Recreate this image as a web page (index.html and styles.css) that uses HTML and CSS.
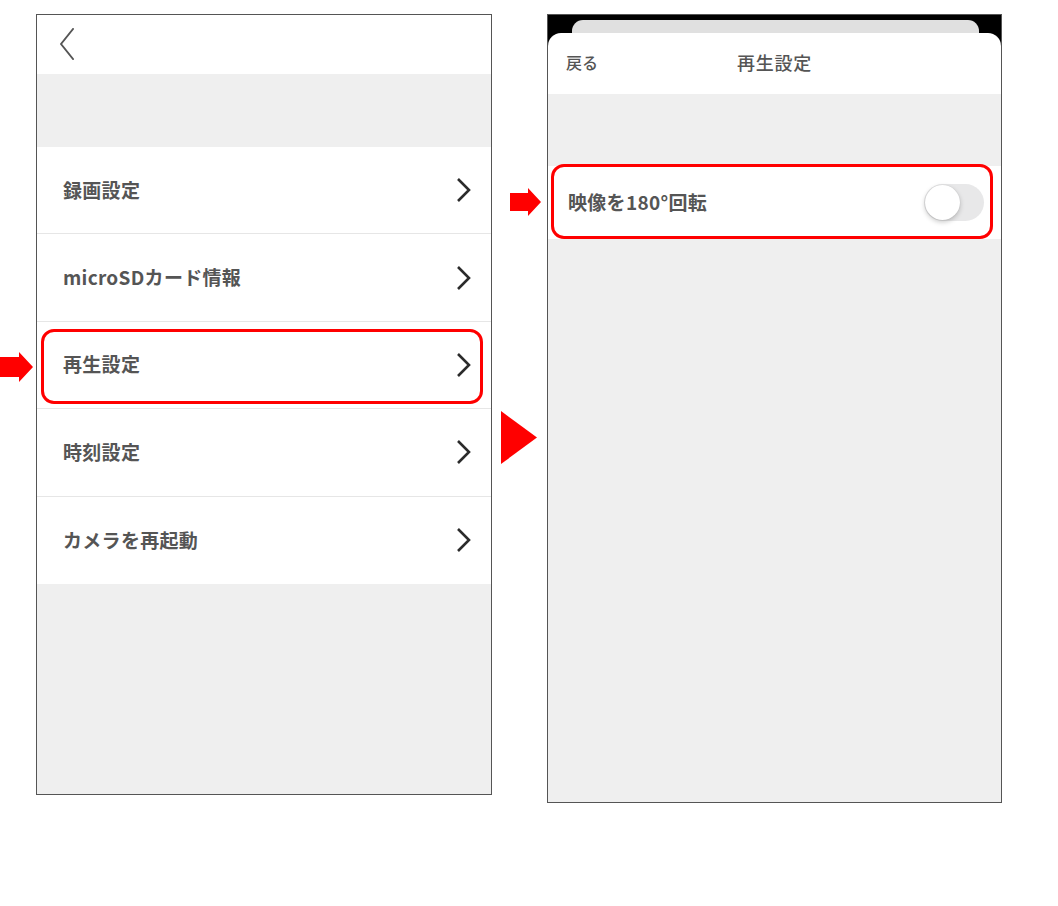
FILE: index.html
```html
<!DOCTYPE html>
<html lang="ja">
<head>
  <meta charset="UTF-8">
  <meta name="viewport" content="width=device-width, initial-scale=1.0">
  <title>再生設定</title>
  <link rel="stylesheet" href="styles.css">
</head>
<body>
  <div class="stage">
    <div class="phone phone-left">
      <div class="top-bar">
        <svg class="back" width="16" height="32" viewBox="0 0 16 32">
          <path d="M14 1 L2 16 L14 31" fill="none" stroke="#555" stroke-width="2" stroke-linecap="round" stroke-linejoin="round"/>
        </svg>
      </div>
      <div class="spacer"></div>
      <div class="menu">
        <div class="menu-row">
          <span class="label">録画設定</span>
          <svg class="chev" width="16" height="26" viewBox="0 0 16 26"><path d="M2 2 L13 13 L2 24" fill="none" stroke="#2b2b2b" stroke-width="2.6"/></svg>
        </div>
        <div class="menu-row">
          <span class="label">microSDカード情報</span>
          <svg class="chev" width="16" height="26" viewBox="0 0 16 26"><path d="M2 2 L13 13 L2 24" fill="none" stroke="#2b2b2b" stroke-width="2.6"/></svg>
        </div>
        <div class="menu-row marked">
          <svg class="pointer pointer-left" width="33" height="30" viewBox="0 0 33 30"><polygon points="0,5 19,5 19,0 33,15 19,30 19,25 0,25" fill="#f00"/></svg>
          <span class="label">再生設定</span>
          <svg class="chev" width="16" height="26" viewBox="0 0 16 26"><path d="M2 2 L13 13 L2 24" fill="none" stroke="#2b2b2b" stroke-width="2.6"/></svg>
          <div class="highlight highlight-left"></div>
        </div>
        <div class="menu-row">
          <span class="label">時刻設定</span>
          <svg class="chev" width="16" height="26" viewBox="0 0 16 26"><path d="M2 2 L13 13 L2 24" fill="none" stroke="#2b2b2b" stroke-width="2.6"/></svg>
        </div>
        <div class="menu-row">
          <span class="label">カメラを再起動</span>
          <svg class="chev" width="16" height="26" viewBox="0 0 16 26"><path d="M2 2 L13 13 L2 24" fill="none" stroke="#2b2b2b" stroke-width="2.6"/></svg>
        </div>
      </div>
    </div>

    <div class="between">
      <svg width="36" height="53" viewBox="0 0 36 53"><polygon points="0,0 36,26.5 0,53" fill="#f00"/></svg>
    </div>

    <div class="phone phone-right">
      <div class="sheet-wrap">
        <div class="peek"></div>
        <div class="sheet-head">
          <span class="back-text">戻る</span>
          <span class="title">再生設定</span>
          <span></span>
        </div>
      </div>
      <div class="spacer spacer-right"></div>
      <div class="toggle-row">
        <svg class="pointer pointer-right" width="31" height="28" viewBox="0 0 31 28"><polygon points="0,5 18,5 18,0 31,14 18,28 18,23 0,23" fill="#f00"/></svg>
        <span class="label">映像を180°回転</span>
        <div class="switch"><div class="knob"></div></div>
        <div class="highlight highlight-right"></div>
      </div>
    </div>
  </div>
</body>
</html>
```

FILE: styles.css
```css
body {
  margin: 0;
  background-color: #fff;
  font-family: "Noto Sans CJK JP", "Noto Sans", sans-serif;
}
.stage {
  display: flex;
  align-items: flex-start;
  padding: 14px 0 0 36px;
}
.phone {
  border: 1px solid #555;
  background-color: #efefef;
  box-sizing: border-box;
  display: flex;
  flex-direction: column;
}
.phone-left {
  width: 456px;
  height: 781px;
}
.phone-right {
  width: 455px;
  height: 789px;
}
.top-bar {
  height: 59px;
  background-color: #fff;
  display: flex;
  align-items: center;
  padding-left: 22px;
}
.back {
  margin-top: -2px;
}
.spacer {
  height: 73px;
}
.spacer-right {
  height: 72px;
}
.menu {
  background-color: #fff;
}
.menu-row {
  position: relative;
  height: 87.4px;
  box-sizing: border-box;
  display: flex;
  align-items: center;
  justify-content: space-between;
  padding: 0 19px 0 26px;
  border-bottom: 1px solid #e6e6e6;
}
.menu-row:last-child {
  border-bottom: none;
}
.label {
  font-size: 19px;
  font-weight: 700;
  color: #555;
  letter-spacing: 0.3px;
  margin-top: -2px;
}
.highlight {
  position: absolute;
  border: 3px solid #f00;
  border-radius: 13px;
  box-sizing: border-box;
  pointer-events: none;
}
.highlight-left {
  left: 4px;
  top: 7px;
  width: 442px;
  height: 75px;
}
.pointer {
  position: absolute;
}
.pointer-left {
  left: -37px;
  top: 30px;
}
.between {
  width: 55px;
  padding-top: 397px;
  display: flex;
  justify-content: center;
}
.between svg {
  margin-left: -2px;
}
.sheet-wrap {
  background-color: #000;
}
.peek {
  height: 13px;
  margin: 5px 22px 0 24px;
  background-color: #e0e0e0;
  border-radius: 11px 11px 0 0;
}
.sheet-head {
  height: 61px;
  background-color: #fff;
  border-radius: 13px 13px 0 0;
  display: grid;
  grid-template-columns: 1fr auto 1fr;
  align-items: center;
  padding: 0 18px 3px;
  box-sizing: border-box;
}
.back-text {
  font-size: 16px;
  font-weight: 500;
  color: #555;
}
.title {
  font-size: 18px;
  font-weight: 500;
  color: #555;
  letter-spacing: 0.8px;
}
.toggle-row {
  position: relative;
  height: 73px;
  background-color: #fff;
  display: flex;
  align-items: center;
  justify-content: space-between;
  padding: 0 17px 0 20px;
}
.switch {
  width: 60px;
  height: 37px;
  border-radius: 19px;
  background-color: #e8e8e9;
  position: relative;
}
.knob {
  position: absolute;
  left: 1px;
  top: 1px;
  width: 35px;
  height: 35px;
  border-radius: 50%;
  background-color: #fff;
  box-shadow: 0 2px 5px rgba(0, 0, 0, 0.22), 0 0 1px rgba(0, 0, 0, 0.15);
}
.highlight-right {
  left: 3px;
  top: -2px;
  width: 442px;
  height: 75px;
}
.pointer-right {
  left: -38px;
  top: 22px;
}
```
